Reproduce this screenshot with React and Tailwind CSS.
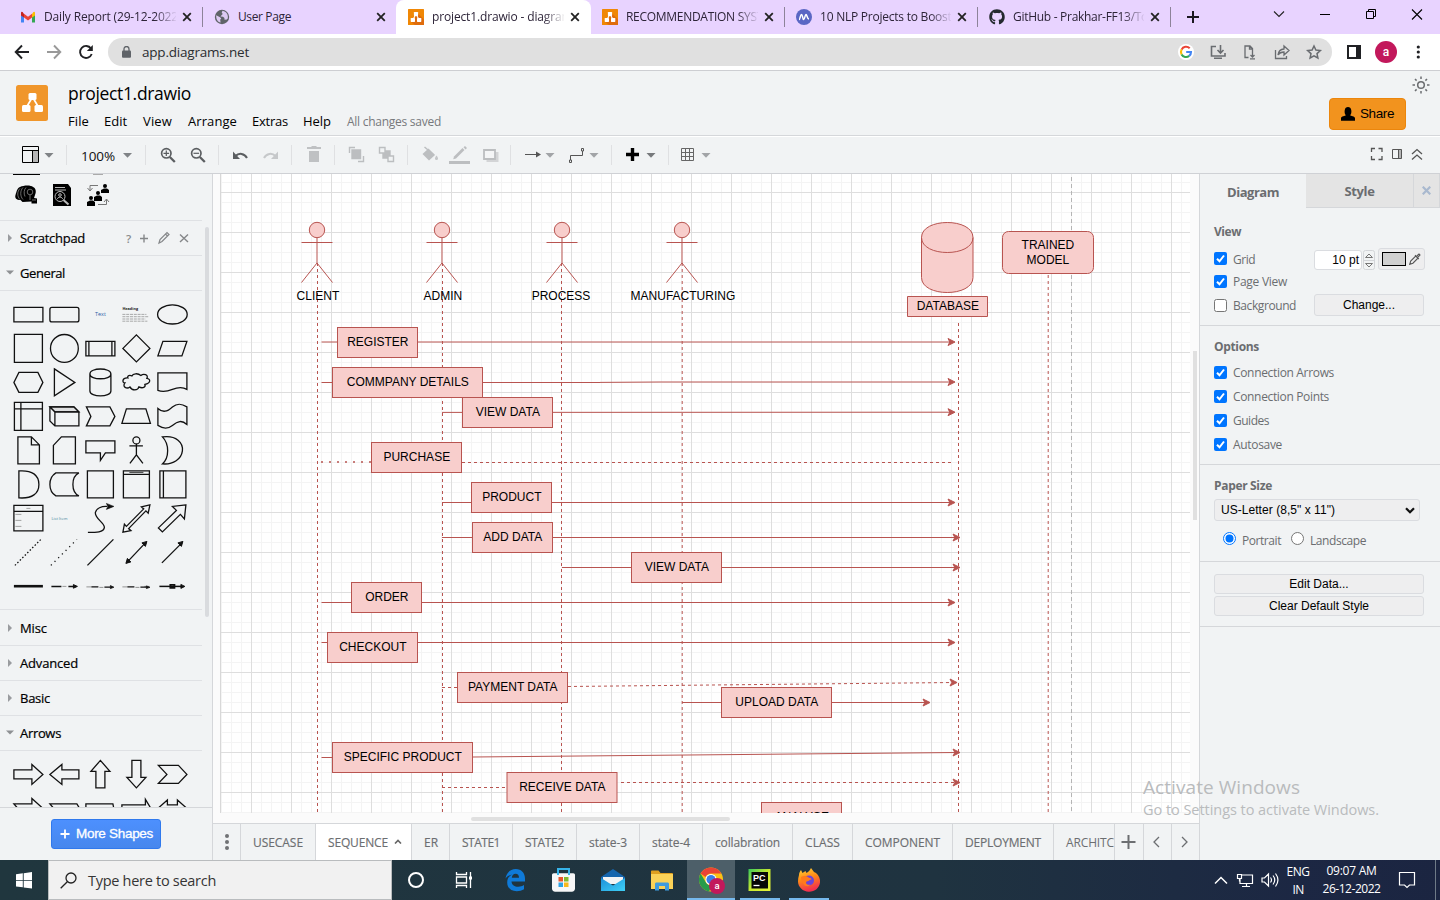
import React, { useLayoutEffect, useRef, useState } from "react";
import { FaGithub } from "react-icons/fa";

/* Text set to a given width by adjusting its tracking. */
function Fit({ w, children, className = "" }) {
  const ref = useRef(null);
  const [spacing, setSpacing] = useState(0);
  useLayoutEffect(() => {
    const natural = ref.current.getBoundingClientRect().width;
    setSpacing((w - natural) / String(children).length);
  }, []);
  return (
    <span ref={ref} className={"inline-block shrink-0 whitespace-nowrap " + className} style={{ letterSpacing: spacing + "px" }}>
      {children}
    </span>
  );
}

const UI = "font-['Open_Sans','Noto_Sans',sans-serif]";
const ARIAL = "font-['Liberation_Sans',Arial,sans-serif]";

/* ---------- Browser chrome ---------- */

function DrawioMark({ size = 16, h }) {
  return (
    <svg width={size} height={h || size} viewBox="0 0 16 16" preserveAspectRatio="none" className="shrink-0">
      <rect width="16" height="16" fill="#f08705" rx="0.5" />
      <path d="M10 4.5 16 10.5V16H7L2.6 12.6Z" fill="#df6c0c" />
      <path d="M8 5 4.8 11M8 5l3.2 6" stroke="#fff" strokeWidth="1.1" />
      <rect x="5.9" y="2.9" width="4.2" height="4" rx="0.6" fill="#fff" />
      <rect x="2.7" y="8.9" width="4.3" height="4" rx="0.6" fill="#fff" />
      <rect x="9" y="8.9" width="4.3" height="4" rx="0.6" fill="#fff" />
    </svg>
  );
}

function GmailMark() {
  return (
    <svg width="16" height="16" viewBox="0 0 16 16" className="shrink-0">
      <path d="M1 5v8.5h3V7z" fill="#4285f4" />
      <path d="M15 5v8.5h-3V7z" fill="#34a853" />
      <path d="M1 4.2v2.2L4 8.6V4.9L2.6 3A1.2 1.2 0 0 0 1 4.2z" fill="#c5221f" />
      <path d="M15 4.2v2.2L12 8.6V4.9L13.4 3A1.2 1.2 0 0 1 15 4.2z" fill="#fbbc04" />
      <path d="M4 4.7 8 7.8l4-3.1v3.9l-4 3-4-3z" fill="#ea4335" />
    </svg>
  );
}

function GlobeMark() {
  return (
    <svg width="16" height="16" viewBox="0 0 16 16" className="shrink-0">
      <circle cx="8" cy="8" r="7.2" fill="#5f6368" />
      <path d="M2.2 6.2 6 8.2l1.2 1-1 1.5.4 2.8C3.8 13 2 10.500 2.200 6.200zM8.500 1.800l-.8 1.700 1 1.500-1.200 1.200-1 1.300 2.500.2 1.500 1.300-.2 1.500 2 .3 1.500-1.300c.6-3.600-1.300-7-5.300-7.700z" fill="#dcc9f2" />
    </svg>
  );
}

function CloseX() {
  return (
    <svg width="10" height="10" viewBox="0 0 10 10" className="shrink-0">
      <path d="M1.200 1.200 8.800 8.800M8.800 1.200 1.200 8.800" stroke="#222" strokeWidth="1.800" />
    </svg>
  );
}

const browserTabs = [
  { title: "Daily Report (29-12-2022", w: 134, icon: <GmailMark />, fade: true, cell: "w-[203px] pl-[20px]", clip: "w-[132px]", gap: "ml-[6px]", sep: true },
  { title: "User Page", w: 53, icon: <GlobeMark />, cell: "w-[193px] pl-[11px]", clip: "w-[132px]", gap: "ml-[6px]" },
  { title: "project1.drawio - diagrams", w: 146, icon: <DrawioMark />, fade: true, active: true, cell: "w-[195px] pl-[12px]", clip: "w-[132px]", gap: "ml-[6px]" },
  { title: "RECOMMENDATION SYST", w: 137, icon: <DrawioMark />, fade: true, cell: "w-[194px] pl-[11px]", clip: "w-[132px]", gap: "ml-[6px]", sep: true },
  { title: "10 NLP Projects to Boost Y", w: 141, icon: <svg width="16" height="16" viewBox="0 0 16 16" className="shrink-0"><circle cx="8" cy="8" r="8" fill="#5a67c4" /><path d="M3 10.500c1.200 0 1.300-5 2.500-5s1 5 2.200 5 1.200-5 2.300-5 1 4.500 3 4.500" fill="none" stroke="#fff" strokeWidth="1.500" /></svg>, fade: true, cell: "w-[193px] pl-[11px]", clip: "w-[131px]", gap: "ml-[6px]", sep: true },
  { title: "GitHub - Prakhar-FF13/To", w: 135, icon: <FaGithub size={16} color="#24292f" className="shrink-0" />, fade: true, cell: "w-[193px] pl-[11px]", clip: "w-[131px]", gap: "ml-[6px]", sep: true },
];

function BrowserChrome() {
  return (
    <div className="h-[71px] shrink-0 border-b border-[#cdced2] bg-white">
      <div className="flex h-[34px] bg-[#e8d3ff]">
        {browserTabs.map((t) => (
          <div key={t.title} className={"flex h-[34px] shrink-0 items-center " + t.cell + (t.active ? " rounded-t-lg bg-white" : "")}>
            {t.icon}
            <div
              className={
                "ml-[8px] overflow-hidden text-[12px] leading-[18px] text-[#2d2438] " + t.clip +
                (t.fade ? " [mask-image:linear-gradient(to_right,#000_84%,transparent_101%)]" : "")
              }
            >
              <Fit w={t.w}>{t.title}</Fit>
            </div>
            <div className={t.gap}><CloseX /></div>
            {t.sep && <div className="ml-auto h-[20px] w-px bg-[#8d8399]" />}
          </div>
        ))}
        <svg width="269" height="34" viewBox="1171 0 269 34" fill="none">
          <path d="M1187 17h12M1193 11v12" stroke="#1b1720" strokeWidth="2" />
          <path d="m1274 11.500 5 5 5-5" stroke="#222" strokeWidth="1.100" />
          <path d="M1320 14.500h10" stroke="#000" />
          <path d="M1366.500 11.500h7v7h-7zM1368.500 11.500v-2h7v7h-2" stroke="#000" />
          <path d="m1412 9.500 10 10M1422 9.500l-10 10" stroke="#000" strokeWidth="1.100" />
        </svg>
      </div>
      <div className="flex h-[36px] items-center">
        <svg width="108" height="36" viewBox="0 34 108 36" fill="none" strokeWidth="1.900">
          <path d="M29 52H16M22 45.500 15.700 52l6.300 6.500" stroke="#202124" />
          <path d="M47 52h13M54 45.500l6.300 6.500-6.300 6.500" stroke="#999" />
          <path d="M91 48.500A6 6 0 1 0 91.700 54" stroke="#202124" />
          <path d="M92.800 45v6h-6z" fill="#202124" />
        </svg>
        <div className="flex h-[28px] w-[1224px] items-center rounded-full bg-[#e0e0e0]">
          <svg width="9" height="12" viewBox="0 0 9 12" className="ml-[14px]">
            <rect y="4.500" width="9" height="7.300" rx="1" fill="#5f6368" />
            <path d="M2 5V3a2.500 2.500 0 0 1 5 0v2" fill="none" stroke="#5f6368" strokeWidth="1.300" />
          </svg>
          <Fit w={107} className="ml-[11px] text-[13.5px] text-[#2b2d30]">app.diagrams.net</Fit>
          <svg width="160" height="28" viewBox="1172 38 160 28" fill="none" stroke="#696c70" strokeWidth="1.300" className="ml-auto">
            <circle cx="1186" cy="52" r="8" fill="#fff" stroke="none" />
            <g strokeWidth="2.100">
              <path d="M1189.700 48.200a5 5 0 0 0-8.100 1.400" stroke="#ea4335" />
              <path d="M1181.600 49.600a5 5 0 0 0 0 4.800" stroke="#fbbc05" />
              <path d="M1181.600 54.400a5 5 0 0 0 7.600 1.500" stroke="#34a853" />
              <path d="M1189.200 55.900a5 5 0 0 0 1.800-3.900h-4.800" stroke="#4285f4" />
            </g>
            <path d="M1216 46.500h-4.500v9.500h13.500v-3M1214 58.300h8M1220.500 45v7.500M1217.500 50l3 3 3-3" strokeWidth="1.600" />
            <path d="M1248.500 57.500h-3.500v-11.500h5l2.500 2.500v3.500M1249.500 46v3h3M1252.500 52v4.500M1250.500 55l2 2 2-2M1250 58.800h5" />
            <path d="M1275.500 50v8.500h11V56M1278 55c.5-4 2.500-5.800 6-6v-3l5 4.500-5 4.500v-3c-3 0-4.500.8-6 3z" />
            <path d="m1314 46 1.900 4.100 4.400.5-3.300 3 .9 4.400-3.900-2.200-3.900 2.200.9-4.400-3.300-3 4.400-.5z" strokeWidth="1.500" />
          </svg>
        </div>
        <svg width="108" height="36" viewBox="1332 34 108 36">
          <path d="M1348 46h12v12h-12z" fill="none" stroke="#202124" strokeWidth="2" />
          <path d="M1356 46h4v12h-4z" fill="#202124" />
          <circle cx="1386" cy="52" r="11" fill="#c2185b" />
          <text x="1386" y="56" textAnchor="middle" fill="#fff" fontFamily="Roboto, sans-serif" fontSize="12" fontWeight="500">a</text>
          <g fill="#202124"><circle cx="1418.300" cy="47" r="1.600" /><circle cx="1418.300" cy="52" r="1.600" /><circle cx="1418.300" cy="57" r="1.600" /></g>
        </svg>
      </div>
    </div>
  );
}

/* ---------- App header and toolbar ---------- */

const menus = [["File", 21, "mr-[15px]"], ["Edit", 23, "mr-[16px]"], ["View", 29, "mr-[16px]"], ["Arrange", 49, "mr-[15px]"], ["Extras", 36, "mr-[15px]"], ["Help", 28, "mr-[16px]"]];

function Header() {
  return (
    <div className="flex h-[65px] shrink-0 border-b border-[#d5d7da] pl-[16px]">
      <svg width="32" height="36" viewBox="0 0 32 36" className="mt-[14px] shrink-0">
        <rect width="32" height="36" rx="2.500" fill="#f0962b" />
        <path d="M16.500 12 10 23M16.500 12 23 23" stroke="#fff" strokeWidth="1.700" />
        <rect x="12.500" y="8" width="8" height="7" rx="1.500" fill="#fff" />
        <rect x="6" y="20" width="8.500" height="7" rx="1.500" fill="#fff" />
        <rect x="18.500" y="20" width="8.500" height="7" rx="1.500" fill="#fff" />
      </svg>
      <div className="ml-[20px] pt-[10px]">
        <div className="h-[24px] leading-[24px]"><Fit w={123} className="text-[17.5px] text-black">project1.drawio</Fit></div>
        <div className="mt-[6px] flex h-[22px] items-center">
          {menus.map(([m, w, mr]) => <Fit key={m} w={w} className={"text-[13px] text-black " + mr}>{m}</Fit>)}
          <Fit w={94} className="text-[12px] text-[#77797c]">All changes saved</Fit>
        </div>
      </div>
      <div className="ml-auto w-[111px]">
        <svg width="20" height="20" viewBox="-10 -10 20 20" fill="none" stroke="#6b6d70" strokeWidth="1.500" className="ml-[82px] mt-[4px]">
          <circle r="3.300" />
          <path d="M0-8.500v2.500M0 6v2.500M-8.500 0H-6M6 0h2.500M-6-6l1.600 1.600M4.400 4.400 6 6M-6 6l1.600-1.600M4.400-4.400 6-6" />
        </svg>
        <div className="mt-[3px] flex h-[32px] w-[77px] items-center rounded border border-[#ec860c] bg-[#f2931e]">
          <svg width="14" height="14" viewBox="0 0 14 14" className="ml-[11px]">
            <path d="M0 13.700v-2.500C0 9.300 4.500 8.800 4.800 8.200c-1-1-1.400-2.800-1.100-5C4 1 5.300 0 7 0s3 1 3.300 3.200c.3 2.200-.1 4-1.100 5 .3.600 4.800 1.100 4.800 3v2.500z" />
          </svg>
          <Fit w={34} className={"ml-[5px] text-[13.5px] text-black " + ARIAL}>Share</Fit>
        </div>
      </div>
    </div>
  );
}

const Caret = ({ x, fill = "#808386" }) => <path d={`M${x - 4.500} 153h9l-4.500 4.800z`} fill={fill} stroke="none" />;
const Sep = () => <div className="h-[20px] w-px shrink-0 bg-[#dfe0e2]" />;

function Tools({ x, w, children }) {
  return (
    <svg width={w} height="36" viewBox={`${x} 137 ${w} 36`} fill="none" className="shrink-0">{children}</svg>
  );
}

function Toolbar() {
  return (
    <div className="flex h-[38px] shrink-0 items-center border-b border-t border-b-[#cfd1d5] border-t-white">
      <Tools x={0} w={66}>
        <path d="M22.500 146.500h16v16h-16z" stroke="#000" />
        <path d="M33 151h5v11h-5z" fill="#b5b5b5" />
        <path d="M22 150.500h16M32.500 150.500v12" stroke="#000" />
        <Caret x={49} />
      </Tools>
      <Sep />
      <div className="flex w-[78px] items-center">
        <Fit w={34} className="ml-[14px] mt-[3px] text-[13.5px] text-[#111]">100%</Fit>
        <svg width="9" height="5" viewBox="0 0 9 5" className="ml-[8px]"><path d="M0 0h9L4.500 4.800z" fill="#808386" /></svg>
      </div>
      <Sep />
      <Tools x={146} w={72}>
        <g stroke="#5b5e61" strokeWidth="1.700">
          <circle cx="166.300" cy="153.300" r="4.700" /><path d="m169.800 157 5 5" strokeWidth="2.300" /><path d="M163.500 153.300h5.600M166.300 150.500v5.600" strokeWidth="1.200" />
          <circle cx="196.300" cy="153.300" r="4.700" /><path d="m199.800 157 5 5" strokeWidth="2.300" /><path d="M193.500 153.300h5.600" strokeWidth="1.200" />
        </g>
      </Tools>
      <Sep />
      <Tools x={219} w={72}>
        <path d="M235.500 156c3.500-3.500 9-2.800 11.500 2" stroke="#5b5e61" strokeWidth="2" /><path d="M233 151.500v7.500h7z" fill="#5b5e61" />
        <path d="M275.500 156c-3.500-3.500-9-2.800-11.500 2" stroke="#c6c8ca" strokeWidth="2" /><path d="M278 151.500v7.500h-7z" fill="#c6c8ca" />
      </Tools>
      <Sep />
      <Tools x={292} w={42}>
        <path d="M309 151h10v11h-10zM307 147h4l1-1h4l1 1h4v2h-14z" fill="#bfc1c3" />
      </Tools>
      <Sep />
      <Tools x={335} w={72}>
        <g stroke="#bcbec0" strokeWidth="1.400">
          <path d="M352 150h8.500v8.500h-8.500z" fill="#bcbec0" /><path d="M349.500 153v-5.500h5.500M363.500 156v5.500h-5.500" />
          <path d="M383 151h7v7h-7z" fill="#bcbec0" /><path d="M379.500 147.500h5.500v5.500h-5.500zM388 156h5.500v5.500h-5.500z" fill="#f1f3f4" />
        </g>
      </Tools>
      <Sep />
      <Tools x={408} w={102}>
        <path d="m424.500 147 9.500 8" stroke="#bcbec0" strokeWidth="1.500" />
        <path d="m428.500 148.500 6.500 6.500-6 5.500-6.500-6.500z" fill="#bcbec0" /><path d="M436.500 155.500c2.500 3 1.500 4.500 0 4.500s-2.500-1.500 0-4.500z" fill="#c5c7c9" />
        <path d="M449 161h21v3h-21z" fill="#bcbec0" /><path d="m454 156.500 8.500-8.500 2 2-8.500 8.500-2.800.8z" fill="#bcbec0" /><path d="m463.500 147.200 1.500-1.200 2 2-1.500 1.500z" fill="#bcbec0" />
        <path d="M486.500 152h12v10h-12z" fill="#d3d4d6" /><path d="M484 150h11v9h-11z" stroke="#bcbec0" strokeWidth="1.800" fill="#f4f5f6" />
      </Tools>
      <Sep />
      <Tools x={511} w={100}>
        <path d="M525 154.500h12" stroke="#555" /><path d="m536 151.500 5 3-5 3z" fill="#555" /><Caret x={550} fill="#a2a4a7" />
        <path d="M570.500 160v-4.500h12V151" stroke="#555" /><path d="M569.500 160h2v2.500h-2zM581.500 148.500h2v2.500h-2z" stroke="#555" /><Caret x={594} fill="#a2a4a7" />
      </Tools>
      <Sep />
      <Tools x={612} w={56}>
        <path d="M626 154.500h13M632.500 148v13" stroke="#000" strokeWidth="3.400" /><Caret x={651} fill="#77797c" />
      </Tools>
      <Sep />
      <Tools x={669} w={60}>
        <path d="M681.500 148.500h12v12h-12zM681.500 152.500h12M681.500 156.500h12M685.500 148.500v12M689.500 148.500v12" stroke="#666" /><Caret x={706} fill="#a2a4a7" />
      </Tools>
      <svg width="90" height="36" viewBox="1350 137 90 36" fill="none" stroke="#555" strokeWidth="1.300" className="ml-auto">
        <path d="M1371.500 152v-3.500h3.500M1378.500 148.500h3.500v3.500M1382 156v3.500h-3.500M1375 159.500h-3.500V156" />
        <path d="M1398 149.500h4v9h-4z" fill="#b5b5b5" stroke="none" /><path d="M1392.500 149.500h9v9h-9zM1398.500 149.500v9" strokeWidth="1" />
        <path d="m1412 154 5-4.500 5 4.500M1412 159.500l5-4.500 5 4.500" />
      </svg>
    </div>
  );
}

/* ---------- Left palette ---------- */

const shapes = [
  <path d="M-14.500-7h29V7.500h-29z" />,
  <rect x="-14.500" y="-7" width="29" height="14.500" rx="2" />,
  <text y="2" textAnchor="middle" fontSize="5.500" fontFamily="Open Sans" fill="#2f62a8" stroke="none">Text</text>,
  <g stroke="none" fontFamily="Open Sans"><text x="-14" y="-4" fontSize="3.800" fontWeight="700" fill="#222">Heading</text><g stroke="#777" strokeWidth="0.600" strokeDasharray="3 0.800"><path d="M-14 0H10M-14 2.300H12M-14 4.600H9M-14 6.800H11" /></g></g>,
  <ellipse rx="14.800" ry="9.600" />,
  <path d="M-14-14h28v28h-28z" />,
  <circle r="13.900" />,
  <path d="M-14.500-7h29V7.500h-29zM-11.500-7V7.500M11.500-7V7.500" />,
  <path d="M0-13.500 13.500 0 0 13.500-13.500 0z" />,
  <path d="M-9.500-7h24l-5 14.500h-24z" />,
  <path d="M-9.500-10h19L14.500 0l-5 10h-19l-5-10z" />,
  <path d="M-10-13.500 10.500 0-10 13.500z" />,
  <path d="M-10.500-8.500c0-6.500 21-6.500 21 0v17c0 6.500-21 6.500-21 0zM-10.500-8.500c0 6.500 21 6.500 21 0" />,
  <path d="M-8.500-4.500c-6-.5-6 5 -3 5 -3 4 2 6.500 5 4 2 4 8 4 9 0 4 2 7 0 6-2.500 6-1.500 6-5.500 2-6 2-4-3.500-5-6-3-3-2.500-8-2-9 .5-2-1-5-.5-4 2z" />,
  <path d="M-14.500-9.500h29V7c-5-3-9.500-2-14.500 0s-9.500 3-14.500 1z" />,
  <path d="M-14-14h28v28h-28zM-14-7.500h28M-7.500-14v28" />,
  <g><path d="M-14.500-9.500H9.500l5 5H-9.500z" fill="#dddedf" /><path d="M-14.500-9.500H9.500l5 5V9.500h-24l-5-5zM-14.500-9.500l5 5v14M-9.500-4.500h24" /></g>,
  <path d="M-14-9.500H9.500L14.500 0l-5 9.500H-14l4.500-9.500z" />,
  <path d="M-10-7.500H9.500L14 7h-28.500z" />,
  <path d="M-14.500-8c5 4.500 9 3.500 14.500-1.500 5-4 9-3.500 14.500 0V8c-5-4.500-9-3.500-14.500 1-5 4-9 3.500-14.500 0z" />,
  <path d="M-10.500-13.500H3l8 8v19h-21.500zM3-13.500v8h8" />,
  <path d="M-3-13.500h14v27h-22V-5z" />,
  <path d="M-14.500-9.500h29V2.500H5L0 10V2.500h-14.500z" />,
  <g><circle cy="-10" r="3.500" /><path d="M0-6.500v11M-7-4.500H6.500M-6.500 13 0 4.500 6.500 13" /></g>,
  <path d="M-10-13.500c14-2 21 6 20 14S1 14.500-10 13.500c7-6 7-20 0-27z" />,
  <path d="M-9.500-13.500C4-14.500 10.500-9 10.500 0S4 14.500-9.500 13.500z" />,
  <path d="M14.500-11.500c-8 4-8 19 0 23h-23c-8-5-8-18 0-23z" />,
  <path d="M-13-13.500h26v27h-26z" />,
  <g><path d="M-13-13.500h26v27h-26zM-13-10h26" /><path d="M-7-12h14" strokeWidth="0.800" /></g>,
  <path d="M-12.500-13.500h26v27h-26zM-9-13.500v27" />,
  <g><path d="M-14.500-13h29v25.500h-29zM-14.500-7h29" /><path d="M-13-4h6M-13 2h6M-13 8h6M-2-10h4" stroke="#999" strokeWidth="0.900" /></g>,
  <text x="-13" y="1.500" fontSize="4" fontFamily="Open Sans" fill="#4b88a0" stroke="none">List Item</text>,
  <g><path d="M-12.500 14c8 0 16 0 16.500-5C4 4-6 0-5-6c1-4 6-6.500 12-6" /><path d="m6-15 7.500 3-7.500 3 1.500-3z" fill="#111" strokeWidth="0.600" /></g>,
  <path d="M13.500-13.500 5-11.500l2.300 2L-10 8l-2-2.300-1.500 8 8-1.500-2.300-2L9.500-7.500l2.300 2.300z" />,
  <path d="M13.500-13.500 0-12l4 4-18 17.500 4 4L8-4l4 4.500z" />,
  <path d="m-13.500 13 27-27" strokeDasharray="1.500 2" />,
  <path d="m-13.500 13 26-26" strokeDasharray="1.200 4" />,
  <path d="m-13 13 26-26" />,
  <g><path d="m-8.500 9 17-18" /><path d="m-10.500 11 1.500-5 3.500 3.500zM10.500-11l-1.500 5-3.500-3.500z" fill="#111" strokeWidth="1" /></g>,
  <g><path d="m-10.500 10.500 19-19" /><path d="m10.500-11-1.500 5-3.500-3.500z" fill="#111" strokeWidth="1" /></g>,
  <path d="M-14.500-.2h29" strokeWidth="2.600" />,
  <g><path d="M-13 0h10M4 0h6" strokeWidth="1.500" /><path d="M-2 0h4" stroke="#999" strokeWidth="1" /><path d="m9-1.800 4 1.800-4 1.800z" fill="#111" strokeWidth="1" /></g>,
  <g><path d="M-14 .5h5M-1 1h4" stroke="#888" strokeWidth="0.900" /><path d="M-9 .5h7M4 .8h6" strokeWidth="1.200" /><path d="m10-.8 3.500 1.600-3.500 1.400z" fill="#111" strokeWidth="0.800" /></g>,
  <g><path d="M-14 .5h5M-1 1h4M8 0h5" stroke="#888" strokeWidth="0.900" /><path d="M-9 .5h7M4 .8h6" strokeWidth="1.200" /><path d="m10-.5 3.500 1.400-3.500 1.200z" fill="#111" strokeWidth="0.800" /></g>,
  <g><path d="M-13 0h22" strokeWidth="1.500" /><path d="m8.500-2 4 2-4 2z" fill="#111" strokeWidth="0.900" /><path d="M-2-1.500h4v3h-4z" strokeWidth="1.900" /></g>,
];

const arrowShapes = [
  <path d="M-14.500-4.500H3.500V-10L14.500 0 3.500 10V4.500h-18z" />,
  <path d="M14.500-4.500h-17V-10L-14.500 0l12 10V4.500h17z" />,
  <path d="M-4.500 13.500V-3H-9.500L0-14 9.500-3H4.500v16.500z" />,
  <path d="M-4.500-14V3H-9.500L0 13.500 9.500 3H4.500v-17z" />,
  <path d="M-14-9H6l8.500 9L6 9h-20l8.500-9z" />,
  <path d="M-14.500-4.500H3.500V-10L14.500 0 3.500 10V4.500h-18l4-4.500z" />,
  <path d="M-14.500-4.500h27L17 3h-25z" />,
  <path d="M-14.500 8V-4.500h27L15 8" />,
  <path d="M-14.500 8V-3.500H9V-9L14.500 0" />,
  <path d="M-14.500 0-5-8.500v5H5v-5L14.500 0 5 9H-5z" />,
];

function Palette({ items }) {
  return (
    <div className="grid w-[180px] grid-cols-[repeat(5,36px)] ml-[10px]">
      {items.map((s, i) => (
        <svg key={i} width="36" height="34" viewBox="-18.400 -17.400 36 34" fill="none" stroke="#111" strokeWidth="1.300">{s}</svg>
      ))}
    </div>
  );
}

function Section({ title, w, open, h = "h-[35px]", children }) {
  return (
    <div className={"flex w-[202px] shrink-0 items-center border-b border-[#dfe1e4] " + h}>
      <svg width="8" height="8" viewBox="0 0 8 8" className="ml-[6px] shrink-0">
        {open ? <path d="M0 1.500h8L4 5.500z" fill="#8e9093" /> : <path d="M2 0v8l4-4z" fill="#9a9c9f" />}
      </svg>
      <Fit w={w} className="ml-[6px] mt-[2px] text-[13px] font-medium text-black [-webkit-text-stroke:0.2px_#000]">{title}</Fit>
      {children}
    </div>
  );
}

function Sidebar() {
  return (
    <div className="flex w-[213px] shrink-0 flex-col border-r border-[#d5d7da]">
      <div className="flex h-[633px] overflow-hidden">
        <div className="flex w-[205px] flex-col">
          <svg width="202" height="47" viewBox="0 174 202 47" className="shrink-0">
            <path d="M13 174h27v1h-27z" /><path d="M93 174h10v1h-10z" fill="#aaa" />
            <path d="M20 187c4-2 11-2 13 0 3 1 3.500 5 2 8l-1 3 3 .5v5h-5.500v-2l-9 .5-2-2c-4 0-6-2-5-5s1.500-7 4.500-8z" />
            <g stroke="#999" strokeWidth="0.700" fill="none"><path d="M20 188.500c-3 3-3 8 0 11M23 187.500c-3 3-3 9 0 12M26 187.500c-2 2-2.500 6-1 9" /><circle cx="30" cy="192" r="2.800" /><path d="M30 195v5M32 200h4" /></g>
            <path d="M53 184h15l3 4v18H53z" />
            <g stroke="#bbb" strokeWidth="1" fill="none"><path d="M55 187.500h10M55 190h11" /><circle cx="60" cy="196.500" r="5" /><path d="m63.500 200 5 4.500" strokeWidth="2" /><circle cx="60" cy="195" r="1.300" /><path d="M57.500 199c0-2.500 5-2.500 5 0" /></g>
            <g><circle cx="105" cy="186" r="2" /><path d="M101 193v-3l3-1.500h3l2 1.500v3z" /><circle cx="98" cy="193" r="2" /><circle cx="91" cy="198" r="2" /><path d="M94 201v-4l3-1.500h3l2 1.500v4zM87 206v-4l3-1.500h3l2 1.500v4z" /></g>
            <path d="M98 185.500h-8v5M87.500 188l2.500 3 2.500-3M98 204.500h8.500v-5M104 202l2.500-3 2.500 3" stroke="#777" fill="none" />
            <path d="M0 220h202v1H0z" fill="#dfe1e4" />
          </svg>
          <Section title="Scratchpad" w={65}>
            <svg width="70" height="20" viewBox="122 228 70 20" fill="none" stroke="#858789" strokeWidth="1.200" className="ml-[37px]">
              <text x="126" y="242.500" fontSize="11.500" fontFamily="Open Sans, sans-serif" fontWeight="600" fill="#8a8c8e" stroke="none">?</text>
              <path d="M140 238.500h8M144 234.500v8" strokeWidth="1.400" />
              <path d="m159 243 1-3.500 7-7 2 2-7 7zM165.500 234l2 2" />
              <path d="m180 234.500 8 7.500M188 234.500l-8 7.500" strokeWidth="1.400" />
            </svg>
          </Section>
          <Section title="General" w={45} open />
          <div className="h-[319px] shrink-0 border-b border-[#dfe1e4] w-[202px] pt-[6px]"><Palette items={shapes} /></div>
          <Section title="Misc" w={27} h="h-[36px]" />
          <Section title="Advanced" w={58} />
          <Section title="Basic" w={30} />
          <Section title="Arrows" w={41} open />
          <div className="pt-[6px]"><Palette items={arrowShapes} /></div>
        </div>
        <div className="mt-[53px] h-[390px] w-[4px] rounded-full bg-[#d9dbde]" />
      </div>
      <div className="flex h-[53px] items-start border-t border-[#d5d7da] pl-[51px] pt-[11px]">
        <div className={"flex h-[30px] w-[110px] items-center rounded-[3px] border border-[#3079ed] bg-[linear-gradient(#4d90fe,#4787ed)] text-white " + ARIAL}>
          <svg width="10" height="10" viewBox="0 0 10 10" className="ml-[8px]"><path d="M0.500 5h9M5 0.500v9" stroke="#fff" strokeWidth="1.800" /></svg>
          <Fit w={77} className="ml-[6px] mt-px text-[13.5px] [-webkit-text-stroke:0.3px_#fff]">More Shapes</Fit>
        </div>
      </div>
    </div>
  );
}

/* ---------- Sequence diagram ---------- */

const RED = "#b85450";
const PINK = "#f8cecc";

const actors = [[317, "CLIENT"], [442, "ADMIN"], [562, "PROCESS"], [682, "MANUFACTURING"]];

/* x1, y1, x2, y2, style, has arrow head */
const edges = [
  [321.500, 342, 956, 342, "", true],
  [321.500, 382.500, 600, 382.500, ""],
  [600, 382.400, 660, 382, ""],
  [660, 382, 956, 382, "", true],
  [442, 412.400, 956, 412.200, "", true],
  [321, 462, 371, 462, "2 6"],
  [462, 462.500, 952, 462.500, "3 3"],
  [442, 502.500, 956, 502.500, "", true],
  [442, 537.500, 961, 537.500, "", true],
  [562, 567.500, 961, 567.500, "", true],
  [321.500, 602.500, 956, 602.500, "", true],
  [321.500, 642.500, 956, 642.500, "", true],
  [442, 687.500, 457, 687.500, "3 3"],
  [568, 686.500, 958, 682.500, "3 3", true],
  [682, 702.500, 931, 702.500, "", true],
  [321.500, 757.500, 332, 757.500, ""],
  [473, 757, 961, 752.500, "", true],
  [442, 787.500, 507, 787.500, "3 3"],
  [621, 782.500, 961, 782.500, "3 3", true],
];

const boxes = [
  [337, 327, 80, "REGISTER"],
  [332, 367, 150, "COMMPANY DETAILS"],
  [462, 397, 90, "VIEW DATA"],
  [371, 442, 90, "PURCHASE"],
  [471, 482, 80, "PRODUCT"],
  [472, 522, 80, "ADD DATA"],
  [631, 552, 90, "VIEW DATA"],
  [351, 582, 70, "ORDER"],
  [327, 632, 90, "CHECKOUT"],
  [457, 672, 110, "PAYMENT DATA"],
  [721, 687, 110, "UPLOAD DATA"],
  [332, 742, 140, "SPECIFIC PRODUCT"],
  [506.500, 772, 110, "RECEIVE DATA"],
  [761, 802, 80, "ANALYSE"],
];

function Diagram() {
  return (
    <svg width="986" height="639" viewBox="213 174 986 639" className="block shrink-0" fontFamily="Liberation Sans, Arial, sans-serif" fontSize="12">
      <defs>
        <pattern id="grid" x="251" y="192" width="40" height="40" patternUnits="userSpaceOnUse">
          <path d="M10.500 0v40M20.500 0v40M30.500 0v40M0 10.500h40M0 20.500h40M0 30.500h40" stroke="#f4f4f4" />
          <path d="M0.500 0v40M0 0.500h40" stroke="#dedede" />
        </pattern>
      </defs>
      <rect x="213" y="174" width="986" height="639" fill="#fbfbfb" />
      <rect x="221" y="174" width="969" height="639" fill="#fff" />
      <rect x="221" y="174" width="969" height="639" fill="url(#grid)" />
      <path d="M220.500 174v639" stroke="#d8d8d8" />
      <path d="M1071.500 177v636" stroke="#b5b5b5" strokeDasharray="4 3" />

      <g fill={PINK} stroke={RED}>
        {actors.map(([x, name]) => (
          <g key={name}>
            <circle cx={x} cy="230" r="7.700" />
            <path d={`M${x} 238v25M${x - 15.500} 242.500h31M${x} 263l-15.500 19.500M${x} 263l15.500 19.500`} fill="none" />
          </g>
        ))}
        <path d="M921.500 237.500c0-20 51.500-20 51.500 0v40c0 20-51.500 20-51.500 0z" />
        <path d="M921.500 237.500c0 20 51.500 20 51.500 0" fill="none" />
        <path d="M907.500 296.500h80v20h-80z" />
      </g>
      <g fill="none" stroke={RED} strokeDasharray="3 3">
        <path d="M317.500 263v550M442.500 263v550M561.500 263v550M682.200 263v550M958.500 323v490M1048.200 275v538" />
      </g>
      <rect x="1002.500" y="231.500" width="91" height="42" rx="6" fill={PINK} stroke={RED} />
      {edges.map(([x1, y1, x2, y2, dash, head], i) => (
        <g key={i} stroke={RED} fill={RED}>
          <path d={`M${x1} ${y1}L${x2 - (head ? 4 : 0)} ${y2}`} strokeDasharray={dash || undefined} strokeWidth={dash === "2 6" ? 1.600 : 1} />
          {head && <path d={`M${x2 - 1} ${y2}l-7-3.500 1.800 3.500-1.800 3.500z`} />}
        </g>
      ))}
      {boxes.map(([x, y, w, name], i) => (
        <g key={i}>
          <rect x={x + 0.500} y={y + 0.500} width={w} height="30" fill={PINK} stroke={RED} />
          <text x={x + w / 2 + 0.800} y={y + 19} textAnchor="middle">{name}</text>
        </g>
      ))}
      <g textAnchor="middle">
        {actors.map(([x, name]) => <text key={name} x={name === "PROCESS" ? 561 : x + 0.900} y="300">{name}</text>)}
        <text x="947.800" y="310">DATABASE</text>
        <text x="1047.900" y="249">TRAINED</text>
        <text x="1047.900" y="264">MODEL</text>
      </g>
      <path d="M1193 351h4v169h-4z" fill="#e0e0e0" />
    </svg>
  );
}

const pages = [
  ["USECASE", 50, "w-[75px]"], ["SEQUENCE", 60, "w-[96px]"], ["ER", 14, "w-[38px]"], ["STATE1", 38, "w-[63px]"],
  ["STATE2", 39, "w-[64px]"], ["state-3", 38, "w-[63px]"], ["state-4", 38, "w-[63px]"], ["collabration", 65, "w-[90px]"],
  ["CLASS", 35, "w-[60px]"], ["COMPONENT", 75, "w-[100px]"], ["DEPLOYMENT", 76, "w-[101px]"],
];

function PageTabs() {
  return (
    <div className="flex h-[37px] shrink-0 border-t border-[#d5d7da] text-[12px] text-[#6c6e71]">
      <div className="flex w-[28px] shrink-0 items-center justify-center border-r border-[#d5d7da]">
        <svg width="4" height="16" viewBox="0 0 4 16" fill="#707274"><circle cx="2" cy="2" r="2" /><circle cx="2" cy="8" r="2" /><circle cx="2" cy="14" r="2" /></svg>
      </div>
      {pages.map(([p, w, cell]) => (
        <div key={p} className={"flex shrink-0 items-center border-r border-[#d5d7da] pl-[12px] " + cell + (p === "SEQUENCE" ? " bg-white" : "")}>
          <Fit w={w} className="mt-px [-webkit-text-stroke:0.15px_#6c6e71]">{p}</Fit>
          {p === "SEQUENCE" && <svg width="8" height="5" viewBox="0 0 8 5" className="mb-px ml-[6px]"><path d="m1 4.500 3-3 3 3" fill="none" stroke="#666" strokeWidth="1.600" /></svg>}
        </div>
      ))}
      <div className="flex w-[61px] shrink-0 items-center overflow-hidden border-r border-[#d5d7da] pl-[12px]"><Fit w={48} className="mt-px">ARCHITC</Fit></div>
      <svg width="84" height="36" viewBox="1115 824 84 36" fill="none" stroke="#6c6e71" className="shrink-0">
        <path d="M1121.500 842h14M1128.500 835v14" strokeWidth="2" />
        <path d="M1143.500 824v36M1171.500 824v36" stroke="#d5d7da" />
        <path d="m1159 837-5 5 5 5M1182 837l5 5-5 5" strokeWidth="1.300" />
      </svg>
    </div>
  );
}

/* ---------- Format panel ---------- */

const Check = ({ on = true }) => (
  <svg width="13" height="13" viewBox="0 0 13 13" className="shrink-0">
    {on ? (
      <><rect width="13" height="13" rx="2" fill="#0075ff" /><path d="m3 6.800 2.500 2.500L10 3.500" fill="none" stroke="#fff" strokeWidth="2" /></>
    ) : (
      <rect x="0.500" y="0.500" width="12" height="12" rx="2" fill="#fff" stroke="#767676" />
    )}
  </svg>
);

function Row({ label, w, on, cls, children }) {
  return (
    <div className={"flex items-center " + cls}>
      <Check on={on} />
      <Fit w={w} className="ml-[6px] mt-[2px]">{label}</Fit>
      {children}
    </div>
  );
}

const Title = ({ children, w }) => <div className="h-[18px] leading-[18px]"><Fit w={w} className="text-[12px] font-bold">{children}</Fit></div>;
const BTN = "flex items-center justify-center rounded-[3px] border border-[#dadce0] bg-[#eeeeef] text-[12px] text-black font-['Liberation_Sans',Arial,sans-serif]";

function FormatPanel() {
  return (
    <div className="relative w-[241px] shrink-0 border-l border-[#d5d7da] text-[12px] text-[#6b6d70]">
      <div className="flex h-[34px]">
        <div className="flex w-[106px] items-center justify-center"><Fit w={52} className="mt-[4px] text-[13px] font-bold">Diagram</Fit></div>
        <div className="flex w-[108px] items-center justify-center border-b border-r border-[#d5d7da] bg-[#e4e4e4]"><Fit w={30} className="mt-[2px] text-[13px] font-bold">Style</Fit></div>
        <div className="flex w-[26px] items-center justify-center border-b border-r border-[#d5d7da] bg-[#e4e4e4]">
          <svg width="9" height="9" viewBox="0 0 9 9" className="mb-px"><path d="m.7.700 7.600 7.600M8.300.700.700 8.300" stroke="#a9b9cf" strokeWidth="2.200" /></svg>
        </div>
      </div>
      <div className="h-[118px] border-b border-[#d5d7da] pl-[14px] pt-[15px]">
        <Title w={27}>View</Title>
        <Row label="Grid" w={22} on cls="mt-[6px] h-[23px]">
          <div className={"ml-[59px] mt-[2px] flex h-[20px] w-[48px] items-center justify-end rounded-[3px] border border-[#dadce0] bg-white pr-[2px] text-[12px] text-black " + ARIAL}>10 pt</div>
          <svg width="12" height="20" viewBox="0 0 12 20" fill="none" stroke="#d3d5d9" className="ml-px mt-[2px]">
            <rect x="0.500" y="0.500" width="11" height="19" rx="2" /><path d="M0 10.500h12" />
            <path d="M2.500 7.500h7L6 4zM2.500 13.500h7L6 17z" stroke="#777" />
          </svg>
          <div className="ml-[3px] flex h-[22px] w-[47px] items-center rounded-[3px] border border-[#dadce0] bg-[#eeeeef]">
            <div className="ml-[3px] h-[14px] w-[24px] border border-black bg-[#d0d0d0]" />
            <svg width="12" height="12" viewBox="0 0 12 12" fill="none" stroke="#555" className="ml-[3px]"><path d="m.7 11.300 1-3.300 5-5 2.200 2.200-5 5zM6 2.200 9.800 6M7.800 3l2.200-2 1 1-2 2.200" strokeWidth="1.100" /></svg>
          </div>
        </Row>
        <Row label="Page View" w={54} on cls="mt-px h-[20px]" />
        <Row label="Background" w={63} on={false} cls="mt-[2px] h-[24px]">
          <div className={BTN + " ml-[18px] h-[22px] w-[110px]"}>Change...</div>
        </Row>
      </div>
      <div className="h-[139px] border-b border-[#d5d7da] pl-[14px] pt-[12px]">
        <Title w={45}>Options</Title>
        <Row label="Connection Arrows" w={101} on cls="mt-[4px] h-[24px]" />
        <Row label="Connection Points" w={96} on cls="h-[24px]" />
        <Row label="Guides" w={36} on cls="h-[24px]" />
        <Row label="Autosave" w={49} on cls="h-[24px]" />
      </div>
      <div className="h-[97px] border-b border-[#d5d7da] pl-[14px] pt-[12px]">
        <Title w={58}>Paper Size</Title>
        <div className={BTN + " mt-[4px] h-[22px] w-[206px] !justify-between pl-[6px] pr-[4px]"}>
          <Fit w={114}>US-Letter (8,5" x 11")</Fit>
          <svg width="10" height="7" viewBox="0 0 10 7"><path d="m1 1.200 4 4 4-4" fill="none" stroke="#111" strokeWidth="2.200" /></svg>
        </div>
        <div className="mt-[8px] flex h-[22px] items-center pl-[9px]">
          <svg width="13" height="13" viewBox="0 0 13 13" className="mb-[3px]"><circle cx="6.500" cy="6.500" r="6" fill="#fff" stroke="#0075ff" /><circle cx="6.500" cy="6.500" r="4" fill="#0075ff" /></svg>
          <Fit w={39} className="ml-[6px] mt-px">Portrait</Fit>
          <svg width="13" height="13" viewBox="0 0 13 13" className="mb-[3px] ml-[10px]"><circle cx="6.500" cy="6.500" r="6" fill="#fff" stroke="#767676" /></svg>
          <Fit w={56} className="ml-[6px] mt-px">Landscape</Fit>
        </div>
      </div>
      <div className="h-[65px] border-b border-[#d5d7da] pl-[14px] pt-[12px]">
        <div className={BTN + " h-[20px] w-[210px]"}>Edit Data...</div>
        <div className={BTN + " mt-[2px] h-[20px] w-[210px]"}><Fit w={100}>Clear Default Style</Fit></div>
      </div>
      <div className="absolute left-[-57px] top-[600px] flex flex-col items-start text-[#b9bbbd]">
        <Fit w={157} className="text-[19px] leading-[27px]">Activate Windows</Fit>
        <Fit w={236} className="text-[14.500px] leading-[18px]">Go to Settings to activate Windows.</Fit>
      </div>
    </div>
  );
}

/* ---------- Windows taskbar ---------- */

function Taskbar() {
  return (
    <div className="flex h-[40px] shrink-0 bg-[linear-gradient(to_right,#20363e,#1f3340_65%,#1c2743_90%,#1b2541)]">
      <svg width="48" height="40" viewBox="0 860 48 40" fill="#fff"><path d="M16 874.300 22.800 873.300V880H16zM23.700 873.200 32 872v8h-8.300zM16 880.800h6.800v6.500L16 886.400zM23.700 880.800H32v7.700l-8.300-1.100z" /></svg>
      <div className="flex w-[344px] items-center border border-[#b9bcbe] bg-[#f1f1f1]">
        <svg width="17" height="17" viewBox="0 0 17 17" fill="none" stroke="#222" strokeWidth="1.300" className="ml-[11px]"><circle cx="11" cy="6" r="5" /><path d="M7.300 9.700.700 16.300" /></svg>
        <Fit w={128} className="ml-[11px] mt-[2px] text-[14.500px] text-[#353535]">Type here to search</Fit>
      </div>
      <svg width="448" height="40" viewBox="392 860 448 40" fill="none">
        <defs>
          <linearGradient id="fx" x1="0" y1="0" x2="0.300" y2="1"><stop offset="0" stopColor="#ffd93b" /><stop offset="0.500" stopColor="#ff8a16" /><stop offset="1" stopColor="#f2314f" /></linearGradient>
          <linearGradient id="ml" x1="0" y1="0" x2="1" y2="1"><stop offset="0" stopColor="#1d8fd8" /><stop offset="1" stopColor="#3fd0f7" /></linearGradient>
          <linearGradient id="pc" x1="0" y1="0" x2="1" y2="1"><stop offset="0" stopColor="#38c95c" /><stop offset="0.500" stopColor="#c8e92f" /><stop offset="1" stopColor="#e8f43c" /></linearGradient>
        </defs>
        <circle cx="416" cy="880" r="7" stroke="#fff" strokeWidth="2" />
        <path d="M456.500 872v2.500h10V872M456.500 888v-2.500h10v2.500M456.500 877h10v6h-10zM470.500 872v16" stroke="#fff" strokeWidth="1.300" /><path d="M469 876.500h3v3h-3z" fill="#fff" />
        <path d="M505.500 878.500c1-6 5-9.500 10.300-9.500 5.500 0 9.200 4 9.200 9.500v3h-13.500c.3 4 3.500 5.300 6.800 5.200 2.200 0 4-.6 5.700-1.600v4.200c-2 1.200-4.500 1.900-7.300 1.900-5.700 0-9.500-3.600-9.500-8.800 0-3.800 2-6.600 5-8-3.300.6-5.400 2.200-6.700 4.100zM511.800 877.700h7.200c0-2.500-1.200-3.900-3.400-3.900-2.100 0-3.500 1.500-3.800 3.900z" fill="#0f7ad8" fillRule="evenodd" />
        <path d="M552 875c0-1 .8-1.700 1.700-1.700h19.600c1 0 1.700.7 1.700 1.700v13.500c0 2-1.300 3.200-3.200 3.200h-16.600c-2 0-3.200-1.300-3.200-3.200z" fill="#f7f7f7" />
        <path d="M558 875v-6h11v6" stroke="#36b4ea" strokeWidth="2" />
        <path d="M558.500 877h4.500v4.500h-4.500z" fill="#e8562a" /><path d="M564 877h4.500v4.500h-4.500z" fill="#83b92f" /><path d="M558.500 882.500h4.500v4.500h-4.500z" fill="#2ea3e6" /><path d="M564 882.500h4.500v4.500h-4.500z" fill="#f8b91d" />
        <path d="m601 877 12-8 12 8v2h-24z" fill="#1565ad" /><path d="M603 877h20v7h-20z" fill="#f2f3f4" /><path d="m601 878 12 7.500 12-7.500v13h-24z" fill="url(#ml)" />
        <path d="M651 871.500c0-.8.500-1 1-1h6.500l2 2.500H672c.5 0 1 .5 1 1v14.500h-22z" fill="#e0a020" /><path d="M651 874h22v15h-22z" fill="#fbd258" /><path d="M655 890.500v-6.500c0-1 .7-1.500 1.500-1.500h11c.8 0 1.500.5 1.500 1.500v6.500h-4v-4.500h-6v4.500z" fill="#3f9bde" />
        <path d="M687 860h48v40h-48z" fill="#4d5f69" />
        <circle cx="711" cy="879.500" r="12" fill="#fbc116" />
        <path d="M700.600 873.500a12 12 0 0 1 20.800 0H711a6 6 0 0 0-5.500 3.500z" fill="#ea4335" /><path d="M700.600 873.500l5.600 9.500a6 6 0 0 0 5 2.500l-2 6a12 12 0 0 1-8.600-18z" fill="#279b4b" />
        <circle cx="711" cy="879.500" r="5.600" fill="#fff" /><circle cx="711" cy="879.500" r="4.500" fill="#3b7de8" />
        <circle cx="717" cy="886" r="8" fill="#c2185b" /><text x="717" y="889.300" fontSize="9.500" fontFamily="Roboto, sans-serif" fontWeight="500" textAnchor="middle" fill="#fff">a</text>
        <path d="M748.500 869h22v22h-22z" fill="url(#pc)" /><path d="M751.500 872h16.500v16.500h-16.500z" fill="#070707" /><text x="753" y="880.500" fontFamily="Liberation Sans, sans-serif" fontWeight="700" fontSize="9" fill="#fff">PC</text><path d="M753.500 885.500h6" stroke="#fff" strokeWidth="1.300" />
        <path d="M799 875c0-2 1-4 2-5l1.500 3 3-2 1 2c2-1 3.500-3 4.500-5l3 4 2 1c3 2.500 4.500 6 4 9.500-.7 5.500-5.300 9.300-11.200 9.200-6-.1-10.700-4.700-10.800-10.200 0-2.300.3-4.500 1-6.500z" fill="url(#fx)" />
        <circle cx="809" cy="880.500" r="5" fill="#6b45d8" /><path d="M801 877c3-1.500 6-1 7.500.500 2 .5 3 1 3 2-2 0-2 1.500-5 2-1.500 2 1 4 4 3-3 4-9 1-9.500-7.500z" fill="#ff7a1c" />
        <path d="M687 898h48v2h-48zM740 898h40v2h-40zM789 898h40v2h-40z" fill="#76b9ed" />
      </svg>
      <div className="ml-auto flex text-[12px] text-white">
        <svg width="77" height="40" viewBox="1205 860 77 40" fill="none" stroke="#fff" strokeWidth="1.200">
          <path d="m1215 883.500 6-6 6 6" strokeWidth="1.500" />
          <path d="M1242 875h10.500v8.500H1240v-5M1246.500 883.500v3M1242 886.500h8M1237.500 874.500h4v4h-4zM1239.500 878.500v3" />
          <path d="M1262 878h2.500l4-4v12l-4-4h-2.500zM1270.500 877.500c1.200 1.500 1.200 3.500 0 5M1273 875.500c2.200 2.800 2.200 6.200 0 9M1275.500 873.500c3 4 3 9 0 13" />
        </svg>
        <div className="flex w-[32px] flex-col items-center pt-[3px] leading-[18px]"><Fit w={23}>ENG</Fit><Fit w={11} className="leading-[17px]">IN</Fit></div>
        <div className="flex w-[75px] flex-col items-center pt-[2px] leading-[18px]"><Fit w={50}>09:07 AM</Fit><Fit w={58}>26-12-2022</Fit></div>
        <svg width="51" height="40" viewBox="1389 860 51 40" fill="none" stroke="#fff" strokeWidth="1.200">
          <path d="M1399.500 872.500h15v12.500h-5l-2.500 2.500-2.500-2.500h-5z" /><path d="M1435.500 860v40" stroke="#6e7a87" strokeWidth="1" />
        </svg>
      </div>
    </div>
  );
}

export default function App() {
  return (
    <div className={"flex h-[900px] w-[1440px] flex-col overflow-hidden bg-[#f1f3f4] " + UI}>
      <BrowserChrome />
      <Header />
      <Toolbar />
      <div className="flex h-[686px] shrink-0">
        <Sidebar />
        <div className="flex w-[986px] shrink-0 flex-col">
          <Diagram />
          <div className="h-[10px] shrink-0 bg-[#fbfbfb] pl-[258px] pt-[4px]"><div className="h-[4px] w-[259px] rounded-full bg-[#e0e0e0]" /></div>
          <PageTabs />
        </div>
        <FormatPanel />
      </div>
      <Taskbar />
    </div>
  );
}
